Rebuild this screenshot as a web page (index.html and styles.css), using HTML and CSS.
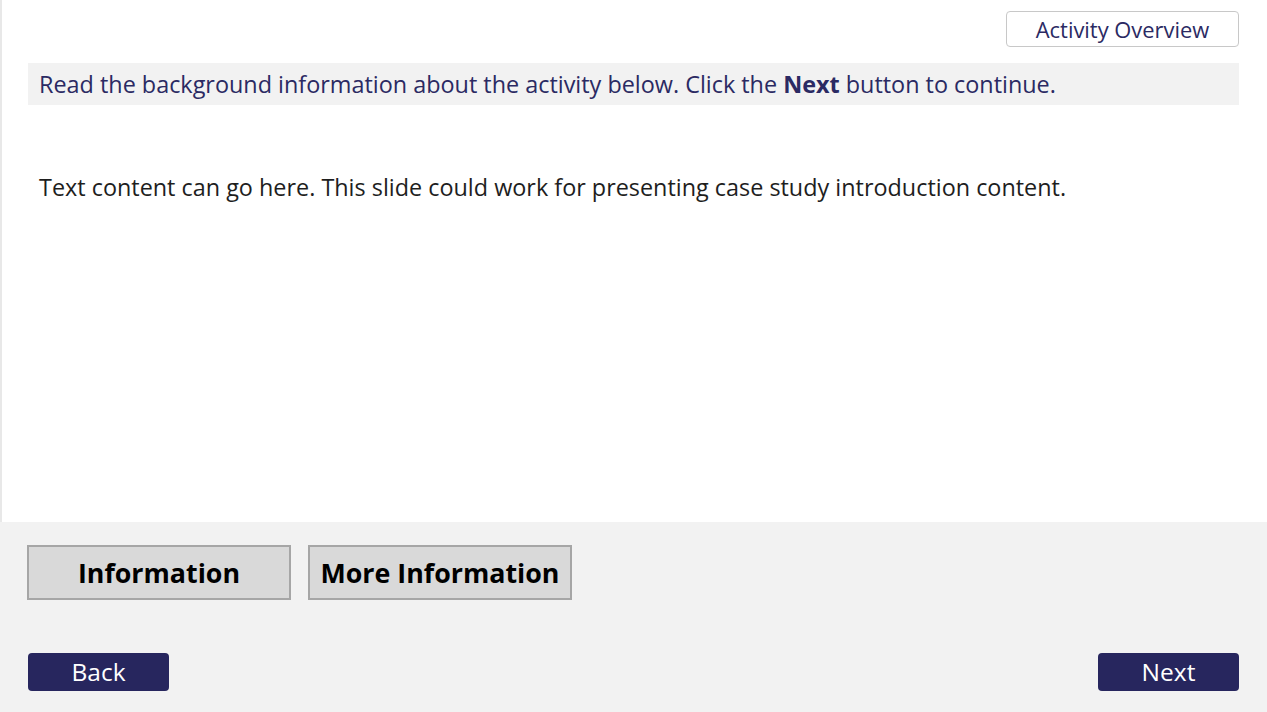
FILE: index.html
```html
<!DOCTYPE html>
<html>
<head>
<meta charset="utf-8">
<link rel="stylesheet" href="styles.css">
</head>
<body>
<div class="slide">
  <div class="main">
    <div class="topbar">
      <button class="overview">Activity Overview</button>
    </div>
    <div class="instruction">Read the background information about the activity below. Click the <b>Next</b> button to continue.</div>
    <p class="content">Text content can go here. This slide could work for presenting case study introduction content.</p>
  </div>
  <div class="footer">
    <div class="tabs">
      <button class="tab">Information</button>
      <button class="tab">More Information</button>
    </div>
    <div class="nav">
      <button class="navbtn">Back</button>
      <button class="navbtn">Next</button>
    </div>
  </div>
</div>
</body>
</html>
```
FILE: styles.css
```css
* { box-sizing: border-box; }
html, body { margin: 0; padding: 0; }
body {
  width: 1267px;
  height: 712px;
  overflow: hidden;
  font-family: "Open Sans", "Noto Sans", sans-serif;
  background: #ffffff;
}
.slide {
  display: flex;
  flex-direction: column;
  height: 712px;
}
.main {
  height: 522px;
  border-left: 2px solid #e8e8e8;
  padding: 11px 28px 0 26px;
}
.topbar {
  display: flex;
  justify-content: flex-end;
}
.overview {
  width: 233px;
  height: 36px;
  border: 1px solid #c8c8c8;
  border-radius: 4px;
  background: #ffffff;
  color: #2b2a63;
  font-family: inherit;
  font-size: 21.9px;
  padding: 0;
  line-height: 36px;
}
.instruction {
  margin-top: 16px;
  height: 42px;
  background: #f2f2f2;
  color: #2b2a63;
  font-size: 23.4px;
  line-height: 42px;
  padding-left: 11px;
  white-space: nowrap;
}
.instruction b { font-weight: 700; }
.content {
  margin: 66px 0 0 11px;
  font-size: 23.4px;
  line-height: 32px;
  color: #1e1e1e;
  white-space: nowrap;
}
.footer {
  flex: 1;
  background: #f2f2f2;
  padding: 23px 28px 0 27px;
  display: flex;
  flex-direction: column;
}
.tabs {
  display: flex;
  gap: 17px;
}
.tab {
  width: 264px;
  height: 55px;
  background: #d9d9d9;
  border: 2px solid #a6a6a6;
  font-family: inherit;
  font-weight: 700;
  font-size: 26.8px;
  line-height: 48px;
  color: #000;
  padding: 0;
}
.nav {
  margin-top: 53px;
  display: flex;
  justify-content: space-between;
  padding-left: 1px;
}
.navbtn {
  width: 141px;
  height: 38px;
  background: #27265e;
  border: none;
  border-radius: 4px;
  color: #ffffff;
  font-family: inherit;
  font-size: 24.5px;
  padding: 0;
  line-height: 38px;
}
```
